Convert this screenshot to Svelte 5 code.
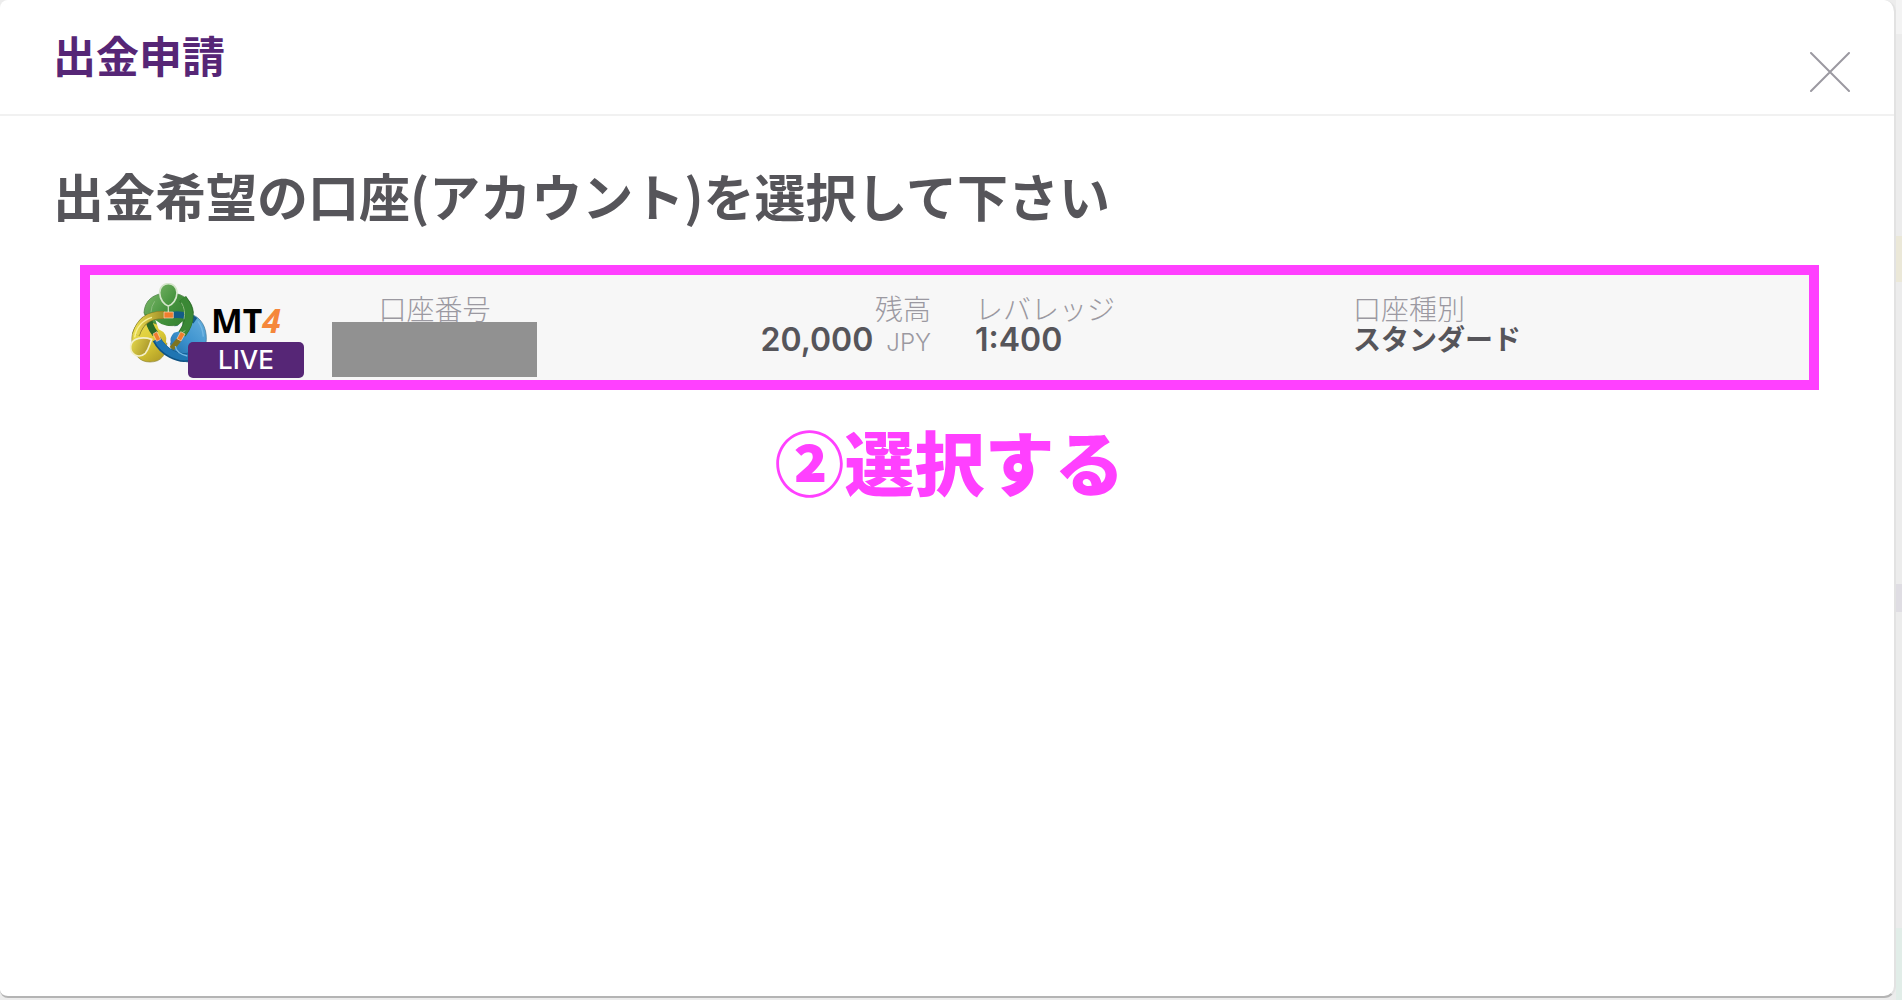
<script>
  const title = '出金申請';
  const heading = '出金希望の口座(アカウント)を選択して下さい';
  const hint = '②選択する';

  const account = {
    mode: 'LIVE',
    balance: '20,000',
    currency: 'JPY',
    leverage: '1:400',
    type: 'スタンダード'
  };

  let open = $state(true);
  let selected = $state(false);
</script>

<div class="page">
  {#if open}
    <main class="modal">
      <header class="modal-header">
        <h1>{title}</h1>
        <button class="close" aria-label="閉じる" onclick={() => (open = false)}>
          <svg width="40" height="40" viewBox="0 0 40 40" fill="none" stroke="currentColor" stroke-width="2" stroke-linecap="round">
            <path d="M1 1 39 39M39 1 1 39"></path>
          </svg>
        </button>
      </header>

      <section class="modal-body">
        <h2>{heading}</h2>

        <button class="account" aria-pressed={selected} onclick={() => (selected = !selected)}>
          <!-- Platform logo -->
          <span class="platform">
            <svg width="160" height="82" viewBox="15 15 480 246">
              <defs>
                <linearGradient id="green" x1="59" y1="40" x2="209" y2="150" gradientUnits="userSpaceOnUse">
                  <stop offset="0" stop-color="#7fba6c"></stop>
                  <stop offset="0.5" stop-color="#43913c"></stop>
                  <stop offset="1" stop-color="#2f7a2c"></stop>
                </linearGradient>
                <linearGradient id="yellow" x1="20" y1="110" x2="130" y2="250" gradientUnits="userSpaceOnUse">
                  <stop offset="0" stop-color="#f1e45c"></stop>
                  <stop offset="0.55" stop-color="#dccb35"></stop>
                  <stop offset="1" stop-color="#a89324"></stop>
                </linearGradient>
                <linearGradient id="face" x1="20" y1="190" x2="78" y2="215" gradientUnits="userSpaceOnUse">
                  <stop offset="0" stop-color="#e3d64a"></stop>
                  <stop offset="1" stop-color="#a8952a"></stop>
                </linearGradient>
                <linearGradient id="arm" x1="30" y1="0" x2="125" y2="0" gradientUnits="userSpaceOnUse">
                  <stop offset="0" stop-color="#eee052"></stop>
                  <stop offset="1" stop-color="#9c8a24"></stop>
                </linearGradient>
                <linearGradient id="blue" x1="240" y1="110" x2="120" y2="240" gradientUnits="userSpaceOnUse">
                  <stop offset="0" stop-color="#67b0de"></stop>
                  <stop offset="0.5" stop-color="#3e93cf"></stop>
                  <stop offset="1" stop-color="#17659f"></stop>
                </linearGradient>
              </defs>
              <!-- Bodies -->
              <path d="M24 192C20 150 48 118 82 126C116 134 132 158 129 190C127 232 112 252 78 252C46 252 28 230 24 192Z" fill="url(#yellow)" stroke="#8f8638" stroke-width="2"></path>
              <path d="M139 190C138 158 158 126 198 108C232 116 248 150 247 184C246 226 222 250 190 252C156 246 140 222 139 190Z" fill="url(#blue)" stroke="#39708f" stroke-width="2"></path>
              <path d="M60 104C62 68 86 46 134 44C182 46 206 70 208 104C202 128 176 144 134 144C96 142 66 130 60 104Z" fill="url(#green)" stroke="#3e7237" stroke-width="2"></path>
              <!-- Gap between the arms -->
              <path d="M94 126 112 138Q134 148 160 144L176 130 172 158 150 164Q136 178 140 194L126 194Q132 166 104 154Z" fill="#f7f7f7"></path>
              <g fill="none" stroke-linecap="butt">
                <path d="M74 110Q72 140 94 168" stroke="#2a6a28" stroke-width="20"></path>
                <path d="M146 111Q182 106 214 128" stroke="#135c87" stroke-width="20"></path>
                <path d="M222 222Q186 252 142 228Q112 212 98 184" stroke="#0f5282" stroke-width="26"></path>
                <path d="M222 222Q186 250 142 226Q114 210 100 184" stroke="#1f75b2" stroke-width="20"></path>
                <path d="M143 212 166 184" stroke="#7d7422" stroke-width="16"></path>
                <path d="M176 62Q216 112 174 168" stroke="#2f6f2c" stroke-width="26"></path>
                <path d="M176 62Q216 112 174 168" stroke="#3a8835" stroke-width="22"></path>
                <path d="M36 170Q54 108 122 111" stroke="#857c2a" stroke-width="24"></path>
                <path d="M36 170Q54 108 122 111" stroke="url(#arm)" stroke-width="20"></path>
                <path d="M81 102Q82 84 92 70M172 74Q186 96 180 124M165 184Q166 166 184 158" stroke="#8bbb7d" stroke-width="3"></path>
                <path d="M222 130Q236 148 238 176M154 204Q156 226 190 234" stroke="#74b7e3" stroke-width="4"></path>
                <path d="M32 178Q40 132 84 118" stroke="#f7f09a" stroke-width="4"></path>
              </g>
              <!-- Heads -->
              <path d="M107 44C108 8 158 8 159 44C158 66 146 80 133 84C120 80 108 66 107 44Z" fill="url(#green)" stroke="#d5e5cb" stroke-width="5"></path>
              <path d="M133 83V102" stroke="#c7dcbd" stroke-width="4"></path>
              <path d="M83 184C58 176 24 178 20 204C18 232 46 242 64 226C74 214 76 200 83 184Z" fill="url(#face)" stroke="#f3efc9" stroke-width="5"></path>
              <!-- Cuffs -->
              <g fill="#f07d2e" stroke="#f6d9c0" stroke-width="2">
                <path d="M120 102H148V120H120Z"></path>
                <path d="M87 168 99 161 110 184 98 190Z"></path>
                <path d="M170 161 183 168 171 189 159 182Z"></path>
              </g>
              <text class="logo-text" x="261" y="165">MT<tspan class="logo-four">4</tspan></text>
            </svg>
            <span class="badge">{account.mode}</span>
          </span>

          <span class="field number">
            <span class="label">口座番号</span>
            <span class="redacted"></span>
          </span>
          <span class="field balance">
            <span class="label">残高</span>
            <span class="value">{account.balance} <small>{account.currency}</small></span>
          </span>
          <span class="field">
            <span class="label">レバレッジ</span>
            <span class="value">{account.leverage}</span>
          </span>
          <span class="field">
            <span class="label">口座種別</span>
            <span class="value type">{account.type}</span>
          </span>
        </button>

        <p class="hint">{hint}</p>
      </section>
    </main>
  {/if}

  <!-- Edge of the dimmed page behind the dialog -->
  <div class="behind">
    <span class="behind-top"></span>
    <span class="behind-notice"></span>
    <span class="behind-text"></span>
    <span class="behind-footer"></span>
  </div>
</div>

<style>
  :global(body) {
    margin: 0;
    background-color: #ececec;
  }

  .page {
    display: flex;
    min-height: 100vh;
    font-family: Inter, 'Noto Sans CJK JP', sans-serif;
    color: #56555a;
  }

  .modal {
    flex: 1;
    min-width: 0;
    margin-bottom: 2px;
    background-color: #fff;
    border-right: 2px solid #e2e2e2;
    border-bottom: 2px solid #b4b4b4;
    border-radius: 8px 12px 12px 8px;
  }

  .modal-header {
    display: flex;
    align-items: flex-start;
    justify-content: space-between;
    height: 114px;
    padding: 0 44px 0 53px;
    border-bottom: 2px solid #f1f1f1;
  }

  h1 {
    margin: 0;
    font-family: 'Noto Sans CJK JP', sans-serif;
    font-size: 43px;
    font-weight: 700;
    line-height: 108px;
    color: #562676;
  }

  .close {
    display: flex;
    margin-top: 52px;
    padding: 0;
    border: none;
    background: transparent;
    color: #9b99a1;
    cursor: pointer;
  }

  .modal-body {
    padding: 46px 75px 48px 80px;
  }

  h2 {
    margin: 0 0 37px -27px;
    font-family: 'Noto Sans CJK JP', sans-serif;
    font-size: 51px;
    font-weight: 700;
    line-height: 66px;
  }

  .account {
    display: grid;
    grid-template-columns: 203px 205px 438fr 378fr 456fr;
    align-items: start;
    box-sizing: border-box;
    width: 100%;
    height: 125px;
    padding: 0 0 0 39px;
    border: 10px solid #ff40ff;
    background-color: #f7f7f7;
    font: inherit;
    color: inherit;
    text-align: left;
    cursor: pointer;
  }

  .platform {
    position: relative;
    padding-top: 8px;
  }

  .platform svg {
    display: block;
  }

  .logo-text {
    font-family: 'Open Sans', 'Noto Sans', sans-serif;
    font-size: 101px;
    font-weight: 700;
    fill: #000;
  }

  .logo-four {
    font-style: italic;
    fill: #f5873c;
  }

  .badge {
    position: absolute;
    top: 67px;
    left: 59px;
    width: 116px;
    border-radius: 5px;
    background-color: #562676;
    color: #fff;
    font-size: 26px;
    font-weight: 500;
    line-height: 36px;
    text-align: center;
  }

  .field {
    display: flex;
    flex-direction: column;
    padding-top: 18px;
  }

  .number {
    text-align: center;
  }

  .balance {
    padding-right: 44px;
    text-align: right;
  }

  .label {
    font-family: 'Noto Sans CJK JP', sans-serif;
    font-size: 28px;
    font-weight: 300;
    line-height: 30px;
    color: #9b99a1;
  }

  .redacted {
    height: 55px;
    margin-top: -1px;
    background-color: #919191;
  }

  .value {
    font-size: 32px;
    font-weight: 600;
    line-height: 34px;
  }

  .value small {
    margin-left: 5px;
    font-size: 24px;
    font-weight: 300;
    color: #9b99a1;
  }

  .value.type {
    font-family: 'Noto Sans CJK JP', sans-serif;
    font-size: 28px;
    line-height: 30px;
  }

  .hint {
    margin: 21px 0 0;
    font-family: 'Noto Sans CJK JP', sans-serif;
    font-size: 70px;
    font-weight: 900;
    line-height: 100px;
    text-align: center;
    color: #ff40ff;
  }

  .behind {
    display: flex;
    flex-direction: column;
    width: 6px;
  }

  .behind-top {
    height: 34px;
    background-color: #f3f3f3;
  }

  .behind-notice {
    height: 46px;
    margin-top: 202px;
    background-color: #ebe8d8;
  }

  .behind-text {
    height: 28px;
    margin-top: 302px;
    background-color: #dfdde3;
  }

  .behind-footer {
    height: 72px;
    margin-top: auto;
    background-color: #e1ede8;
  }
</style>
